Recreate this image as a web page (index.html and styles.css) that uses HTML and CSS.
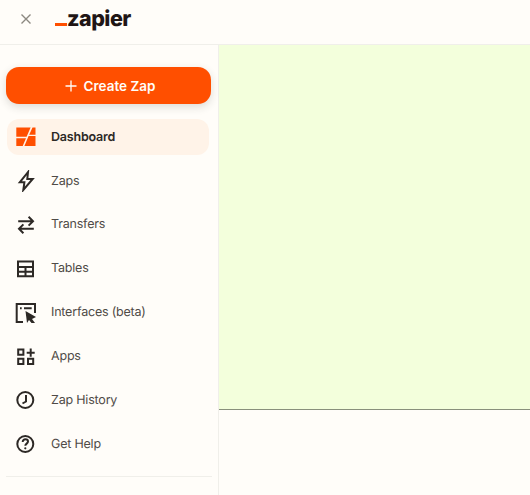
FILE: index.html
```html
<!DOCTYPE html>
<html lang="en">
<head>
  <meta charset="UTF-8" />
  <title>Zapier</title>
  <link rel="stylesheet" href="styles.css">
</head>
<body>
  <header class="topbar">
    <button class="close-btn" aria-label="Close">
      <svg width="12" height="12" viewBox="0 0 12 12"><path d="M1.500 1.500l9 9M10.500 1.500l-9 9" stroke="#8c8880" stroke-width="1.400" fill="none"/></svg>
    </button>
    <div class="logo"><span class="logo-dash"></span><span class="logo-text">zapier</span></div>
  </header>

  <div class="layout">
    <aside class="sidebar">
      <button class="create-btn">
        <svg width="12" height="12" viewBox="0 0 12 12"><path d="M6 0.500v11M0.500 6h11" stroke="#fffdf9" stroke-width="1.300" fill="none"/></svg>
        <span>Create Zap</span>
      </button>

      <nav class="nav">
        <a class="nav-item active" href="#">
          <svg class="nav-icon" viewBox="0 0 22 22"><path fill="#ff4f00" d="M1.300 1.500H15.600L11.600 10.800H1.300zM1.300 12.200H11L7.700 20H1.300zM17.500 1.500h3v7.300h-6.300zM13.600 10h6.900V20H9.400z"/></svg>
          <span>Dashboard</span>
        </a>
        <a class="nav-item" href="#">
          <svg class="nav-icon" viewBox="0 0 22 22"><path class="line" d="M13 2L4.800 12.300H9.400L8.300 20L17.700 8.900H12.300z"/></svg>
          <span>Zaps</span>
        </a>
        <a class="nav-item" href="#">
          <svg class="nav-icon" viewBox="0 0 22 22"><path class="line" d="M3.200 7.200H18M13.600 2.800L18 7.200L13.600 11.600M18.800 14.800H4M8.400 10.400L4 14.800L8.400 19.200"/></svg>
          <span>Transfers</span>
        </a>
        <a class="nav-item" href="#">
          <svg class="nav-icon" viewBox="0 0 22 22"><path class="line" d="M3 3.400H18V18.300H3zM3 9H18M3 13.800H18M10.500 9V18.300"/></svg>
          <span>Tables</span>
        </a>
        <a class="nav-item" href="#">
          <svg class="nav-icon" viewBox="0 0 22 22">
            <path class="line" d="M8 20H1.700V2H20V11"/>
            <path class="line" d="M5 6.300H6.700M9 6.300H16.700"/>
            <path class="fill" d="M10.500 9L21 15L17 17L20 21H16.500L14 18L12 21z"/>
          </svg>
          <span>Interfaces (beta)</span>
        </a>
        <a class="nav-item" href="#">
          <svg class="nav-icon" viewBox="0 0 22 22"><path class="line" d="M3.200 3.600H8.400V8.800H3.200zM3.200 12.700H8.400V17.900H3.200zM13 12.700H18.200V17.900H13zM15.700 2.500V10.700M11.700 6.700H19.700"/></svg>
          <span>Apps</span>
        </a>
        <a class="nav-item" href="#">
          <svg class="nav-icon" viewBox="0 0 22 22"><circle class="line" cx="10.300" cy="11" r="8"/><path class="line" d="M11 6V12.500L7.500 14.500"/></svg>
          <span>Zap History</span>
        </a>
        <a class="nav-item" href="#">
          <svg class="nav-icon" viewBox="0 0 22 22">
            <circle class="line" cx="10.300" cy="11" r="8"/>
            <path class="line" d="M7.700 9c0-1.600 1.200-2.700 2.700-2.700 1.500 0 2.600 1 2.600 2.300 0 2-2.700 2.100-2.700 4.200"/>
            <circle class="fill" cx="10.300" cy="15.300" r="1.100"/>
          </svg>
          <span>Get Help</span>
        </a>
      </nav>
      <div class="divider"></div>
    </aside>

    <main class="content">
      <div class="panel"></div>
    </main>
  </div>
</body>
</html>
```

FILE: styles.css
```css
:root {
  --bg: #fffdf9;
  --orange: #ff4f00;
  --border: #f0efea;
  --ink: #2d2926;
}

* {
  box-sizing: border-box;
}

html, body {
  height: 100%;
}

body {
  margin: 0;
  font-family: 'Inter', sans-serif;
  text-rendering: geometricPrecision;
  background: var(--bg);
  color: var(--ink);
  overflow: hidden;
  display: flex;
  flex-direction: column;
}

.topbar {
  height: 45px;
  flex-shrink: 0;
  display: flex;
  align-items: center;
  padding-left: 20px;
  border-bottom: 1px solid var(--border);
}

.close-btn {
  width: 12px;
  height: 12px;
  padding: 0;
  border: 0;
  background: none;
  display: flex;
  margin-bottom: 7px;
}

.logo {
  display: flex;
  align-items: flex-end;
  margin-left: 23px;
  margin-bottom: 7px;
}

.logo-dash {
  width: 12px;
  height: 3px;
  background: var(--orange);
  margin-bottom: 5px;
}

.logo-text {
  font-size: 21.500px;
  line-height: 24px;
  font-weight: 800;
  letter-spacing: -0.500px;
  color: #201515;
}

.layout {
  flex: 1;
  display: flex;
  min-height: 0;
}

.sidebar {
  width: 219px;
  flex-shrink: 0;
  padding: 22px 6px 0;
  border-right: 1px solid var(--border);
}

.create-btn {
  width: 205px;
  height: 37px;
  padding: 0 0 0 3px;
  border: 0;
  border-radius: 13px;
  background: var(--orange);
  color: var(--bg);
  font-family: inherit;
  font-size: 13.500px;
  font-weight: 600;
  display: flex;
  align-items: center;
  justify-content: center;
  gap: 7px;
  box-shadow: 0 3px 8px rgba(45, 41, 38, 0.16);
}

.nav {
  margin-top: 15.300px;
  padding-left: 1px;
  display: flex;
  flex-direction: column;
  gap: 7.850px;
}

.nav-item {
  width: 202px;
  height: 36px;
  padding-left: 8px;
  border-radius: 12px;
  display: flex;
  align-items: center;
  gap: 14px;
  font-size: 12.500px;
  letter-spacing: -0.200px;
  font-weight: 400;
  color: #4f4b47;
  text-decoration: none;
}

.nav-item.active {
  background: #fff3e8;
  color: var(--ink);
  font-weight: 600;
}

.nav-icon {
  width: 22px;
  height: 22px;
  flex-shrink: 0;
}

.line {
  fill: none;
  stroke: var(--ink);
  stroke-width: 2;
}

.fill {
  fill: var(--ink);
}

.divider {
  height: 1px;
  margin-top: 13.300px;
  background: var(--border);
}

.content {
  flex: 1;
}

.panel {
  height: 365px;
  background: #f3ffdc;
  border-bottom: 1px solid #88907c;
}
```
